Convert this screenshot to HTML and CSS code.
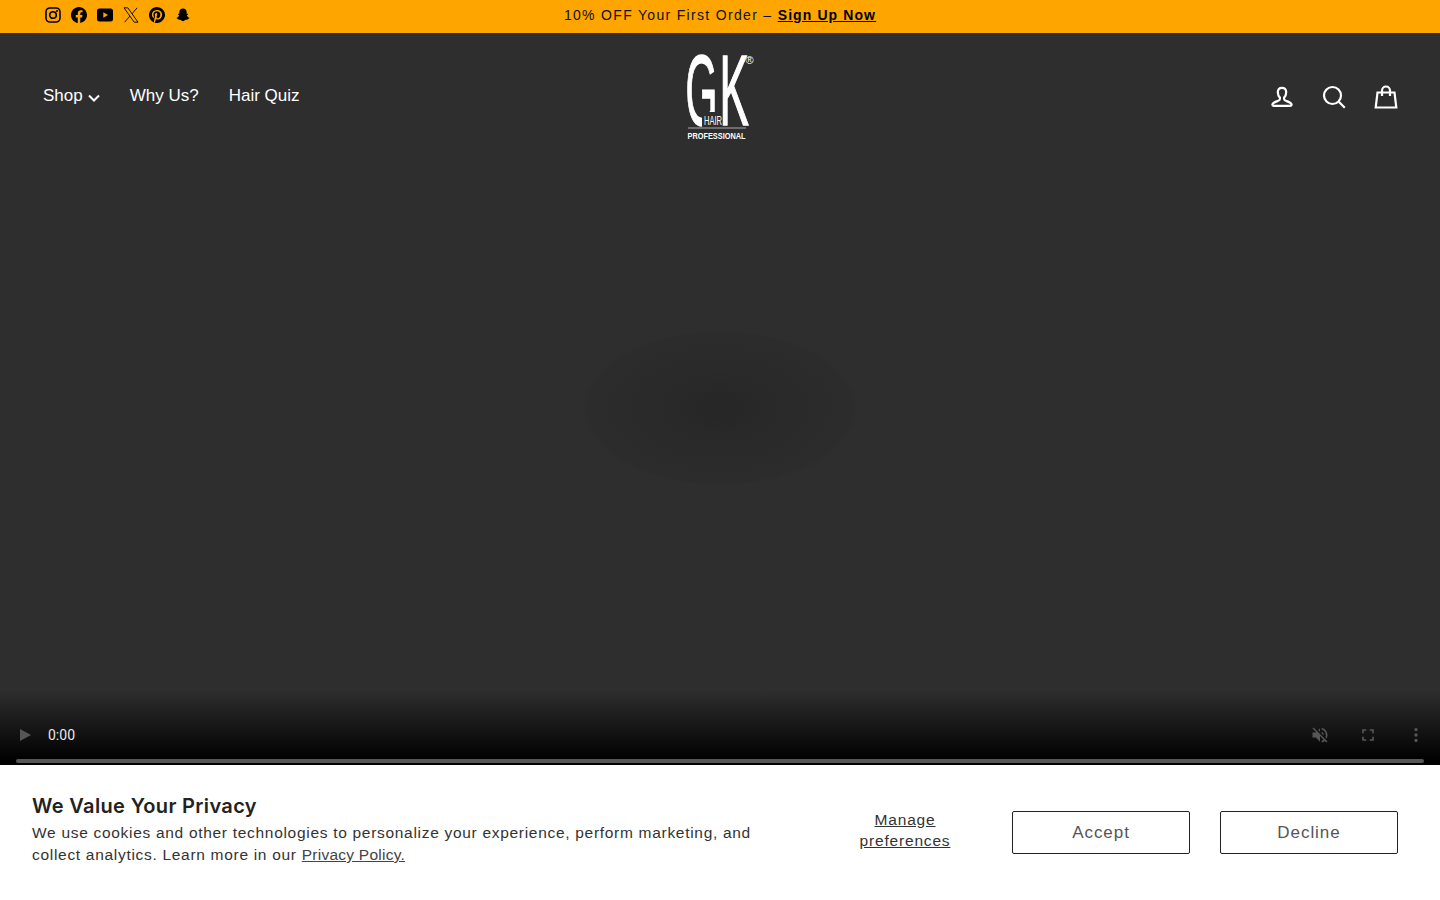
FILE: index.html
```html
<!doctype html>
<html>
<head>
<meta charset="utf-8">
<title>GK Hair</title>
<link rel="stylesheet" href="styles.css">
</head>
<body>
<div class="topbar">
	<div class="social">
		<svg class="social-ico" viewBox="0 0 16 16"><rect class="ig-line" x="1" y="1" width="14" height="14" rx="4"/><circle class="ig-line" cx="8" cy="8" r="3.3"/><circle cx="12" cy="4" r="1"/></svg>
		<svg class="social-ico" viewBox="0 0 16 16"><path d="M16 8.049c0-4.446-3.582-8.05-8-8.05C3.58 0-.002 3.603-.002 8.05c0 4.017 2.926 7.347 6.75 7.951v-5.625h-2.03V8.05H6.75V6.275c0-2.017 1.195-3.131 3.022-3.131.876 0 1.791.157 1.791.157v1.98h-1.009c-.993 0-1.303.621-1.303 1.258v1.51h2.218l-.354 2.326H9.25V16c3.824-.604 6.75-3.934 6.75-7.951"/></svg>
		<svg class="social-ico" viewBox="0 0 16 16"><path fill-rule="evenodd" d="M2.5 1.6h11A2.5 2.5 0 0 1 16 4.1v7.8a2.5 2.5 0 0 1-2.5 2.5h-11A2.5 2.5 0 0 1 0 11.900V4.100A2.500 2.500 0 0 1 2.500 1.600ZM6.300 5.200v5.600L11 8Z"/></svg>
		<svg class="social-ico x-ico" viewBox="0 0 16 16"><path d="M1 .8h3.800l10.200 14.400h-3.800ZM14.200.8 8.900 6.900M6.900 9.100 1.600 15.200"/></svg>
		<svg class="social-ico" viewBox="0 0 16 16"><path d="M8 0a8 8 0 0 0-2.915 15.452c-.07-.633-.134-1.606.027-2.297.146-.625.938-3.977.938-3.977s-.239-.479-.239-1.187c0-1.113.645-1.943 1.448-1.943.682 0 1.012.512 1.012 1.127 0 .686-.437 1.712-.663 2.663-.188.796.4 1.446 1.185 1.446 1.422 0 2.515-1.500 2.515-3.664 0-1.915-1.377-3.254-3.342-3.254-2.276 0-3.612 1.707-3.612 3.471 0 .688.265 1.425.595 1.826a.24.24 0 0 1 .056.230c-.061.252-.196.796-.222.907-.035.146-.116.177-.268.107-1-.465-1.624-1.926-1.624-3.100 0-2.523 1.834-4.840 5.286-4.840 2.775 0 4.932 1.977 4.932 4.620 0 2.757-1.739 4.976-4.151 4.976-.811 0-1.573-.421-1.834-.919l-.498 1.902c-.181.695-.669 1.566-.995 2.097A8 8 0 1 0 8 0"/></svg>
		<svg class="social-ico" viewBox="0 0 16 16"><path d="M8 1.500c2.300 0 3.700 1.700 3.700 3.700v1.700c.6.100 1.200-.3 1.400.1.200.5-.900.900-1.300 1.100.3 1.300 1.400 2.400 2.700 2.800.3.400-.800.800-1.700 1-.2.300-.1.800-.4.900-.600.100-1.400-.2-2.200.200-.600.300-1.200 1.200-2.200 1.200s-1.600-.9-2.200-1.200c-.8-.4-1.600-.1-2.200-.2-.3-.1-.2-.6-.4-.9-.9-.2-2-.6-1.700-1 1.300-.4 2.400-1.500 2.700-2.800-.4-.2-1.500-.6-1.300-1.100.2-.4.800 0 1.400-.1V5.200c0-2 1.400-3.700 3.700-3.700Z"/></svg>
	</div>
	<p class="promo">10% OFF Your First Order – <a href="#">Sign Up Now</a></p>
</div>

<div class="hero">
	<header class="site-header">
		<nav class="main-nav">
			<a href="#">Shop<svg class="chev" viewBox="0 0 12 8"><path d="M1 1.500l5 5 5-5"/></svg></a>
			<a href="#">Why Us?</a>
			<a href="#">Hair Quiz</a>
		</nav>
		<a class="logo" href="#">
			<svg viewBox="0 0 66 84" width="66" height="84">
				<text class="logo-gk" transform="translate(-2.500 70) scale(.41 1)">G</text>
				<text class="logo-gk" transform="translate(31.500 70) scale(.44 1)">K</text>
				<text class="logo-reg" x="57.500" y="9">®</text>
				<rect class="logo-hole" x="14" y="57" width="18" height="15"/>
				<text class="logo-hair" x="16" y="70" textLength="18" lengthAdjust="spacingAndGlyphs">HAIR</text>
				<rect class="logo-rule" x="0" y="72.500" width="58" height="1"/>
				<text class="logo-pro" x="-.5" y="83.500" textLength="58" lengthAdjust="spacingAndGlyphs">PROFESSIONAL</text>
			</svg>
		</a>
		<div class="header-icons">
			<svg class="head-ico" viewBox="0 0 24 24"><path d="M12 2.800c-2.700 0-4.200 2-4.200 4.500 0 2.300 1 4.200 2.100 5.300v1.400c0 1-.8 1.500-2.200 2-2.300.8-4.500 1.500-5.200 3.200-.3.800.1 1.600 1 1.600h17c.9 0 1.300-.8 1-1.600-.7-1.700-2.900-2.400-5.200-3.200-1.400-.5-2.200-1-2.200-2v-1.400c1.100-1.100 2.100-3 2.100-5.300 0-2.500-1.500-4.500-4.200-4.500Z"/></svg>
			<svg class="head-ico" viewBox="0 0 24 24"><circle cx="10.500" cy="10.500" r="8.500"/><path d="M16.800 16.800l6 6"/></svg>
			<svg class="head-ico" viewBox="0 0 24 24"><path d="M3.500 7.500h17l1.800 15H1.700Z"/><path d="M8 11V5.500a4 4 0 0 1 8 0V11"/></svg>
		</div>
	</header>

	<div class="video-controls">
		<div class="control-row">
			<svg class="ctl-ico play-ico" viewBox="0 0 16 16"><path d="M3 2l11 6-11 6Z"/></svg>
			<span class="time">0:00</span>
			<svg class="ctl-ico mute-ico" viewBox="0 0 24 24"><path d="M16.500 12c0-1.800-1-3.300-2.500-4v2.200l2.500 2.500V12Zm2.500 0c0 .9-.2 1.800-.5 2.600l1.500 1.500c.7-1.200 1-2.700 1-4.100 0-4.300-3-7.900-7-8.800v2.100c2.900.9 5 3.500 5 6.700ZM4.300 3 3 4.300 7.700 9H3v6h4l5 5v-6.700l4.300 4.300c-.7.500-1.400.9-2.300 1.200v2.100c1.400-.3 2.600-1 3.700-1.800l2 2 1.300-1.300-9-9L4.300 3ZM12 4 9.900 6.100 12 8.200V4Z"/></svg>
			<svg class="ctl-ico full-ico" viewBox="0 0 24 24"><path d="M7 14H5v5h5v-2H7v-3Zm-2-4h2V7h3V5H5v5Zm12 7h-3v2h5v-5h-2v3ZM14 5v2h3v3h2V5h-5Z"/></svg>
			<svg class="ctl-ico dots-ico" viewBox="0 0 24 24"><circle cx="12" cy="5.500" r="2"/><circle cx="12" cy="12" r="2"/><circle cx="12" cy="18.500" r="2"/></svg>
		</div>
		<div class="timeline"></div>
	</div>
</div>

<section class="cookie">
	<div class="cookie-text">
		<h2>We Value Your Privacy</h2>
		<p>We use cookies and other technologies to personalize your experience, perform marketing, and collect analytics. Learn more in our <a href="#">Privacy Policy.</a></p>
	</div>
	<div class="cookie-actions">
		<a class="manage" href="#">Manage preferences</a>
		<button class="btn">Accept</button>
		<button class="btn">Decline</button>
	</div>
</section>
</body>
</html>
```

FILE: styles.css
```css
*{margin:0;padding:0;box-sizing:border-box;}
html,body{height:100%;}
body{background:#fff;font-family:"Liberation Sans",Arial,sans-serif;color:#222;overflow:hidden;}
a{color:inherit;}

/* top bar */
.topbar{height:33px;background:#ffa500;display:grid;grid-template-columns:1fr auto 1fr;align-items:center;padding:0 45px 4px;color:#111;}
.social{display:flex;gap:10px;align-items:center;}
.social-ico{width:16px;height:16px;fill:#000;display:block;}
.ig-line{fill:none;stroke:#000;stroke-width:1.600;}
.x-ico{fill:none;stroke:#000;stroke-width:.9;}
.promo{font-size:14px;letter-spacing:1.320px;grid-column:2;}
.promo a{font-weight:700;color:#000;letter-spacing:1.100px;}

/* hero + header */
.hero{height:732px;display:flex;flex-direction:column;background:radial-gradient(ellipse 138px 78px at 720px 375px,#262626 0%,#2a2a2a 50%,#2c2c2c 96%,#2e2e2e 100%) #2e2e2e;}
.site-header{display:grid;grid-template-columns:1fr auto 1fr;align-items:center;padding:22px 42px 20px 43px;color:#fff;}
.main-nav{display:flex;gap:30px;font-size:17px;padding-bottom:2px;}
.main-nav a{text-decoration:none;display:flex;align-items:center;}
.chev{width:12px;height:8px;margin:4px 0 0 5px;fill:none;stroke:#fff;stroke-width:2;}
.logo{display:block;height:84px;}
.logo svg{display:block;overflow:visible;}
.logo-gk{font-family:"Liberation Sans",sans-serif;font-size:100px;fill:#fff;stroke:#fff;stroke-width:1.500;}
.logo-reg{font-family:"Liberation Sans",sans-serif;font-size:11px;fill:#fff;}
.logo-hole{fill:#2e2e2e;}
.logo-hair{font-family:"Liberation Sans",sans-serif;font-size:13px;fill:#fff;}
.logo-rule{fill:#aaa;}
.logo-pro{font-family:"Liberation Sans",sans-serif;font-size:8.500px;font-weight:700;fill:#fff;}
.header-icons{display:flex;justify-content:flex-end;gap:28px;}
.head-ico{width:24px;height:24px;fill:none;stroke:#fff;stroke-width:2.200;display:block;}

/* video controls */
.video-controls{margin-top:auto;height:75px;padding:0 16px 2px;display:flex;flex-direction:column;justify-content:flex-end;background:linear-gradient(to bottom,rgba(0,0,0,0),#000 95%);}
.control-row{display:flex;align-items:center;height:32px;margin-bottom:8px;}
.ctl-ico{fill:#565656;display:block;}
.play-ico{width:16px;height:16px;margin-left:1px;}
.time{font-family:Roboto,sans-serif;font-size:14px;color:#e8e8e8;margin-left:15px;}
.mute-ico{width:20px;height:20px;margin-left:auto;}
.full-ico{width:20px;height:20px;margin-left:28px;}
.dots-ico{width:20px;height:20px;margin:0 -2px 0 28px;}
.timeline{height:4px;background:#575757;border-radius:2px;}

/* cookie banner */
.cookie{height:135px;display:flex;justify-content:space-between;align-items:center;padding:0 42px 0 32px;background:#fff;}
.cookie-text{width:760px;padding-bottom:5px;}
.cookie-text h2{font-family:Inter,sans-serif;font-size:20px;font-weight:600;line-height:24px;letter-spacing:.35px;color:#222;margin-bottom:4px;}
.cookie-text p{font-size:15.500px;line-height:22px;letter-spacing:.7px;color:#333;}
.cookie-text p a{letter-spacing:.25px;color:#444;}
.cookie-actions{display:flex;align-items:center;gap:30px;}
.manage{display:block;width:154px;padding:0 30px 6px;text-align:center;font-size:15.500px;line-height:21px;letter-spacing:.82px;color:#333;}
.btn{width:178px;height:43px;background:#fff;border:1px solid #222;border-radius:2px;font-family:"Liberation Sans",sans-serif;font-size:17px;letter-spacing:.95px;color:#555;}
```
